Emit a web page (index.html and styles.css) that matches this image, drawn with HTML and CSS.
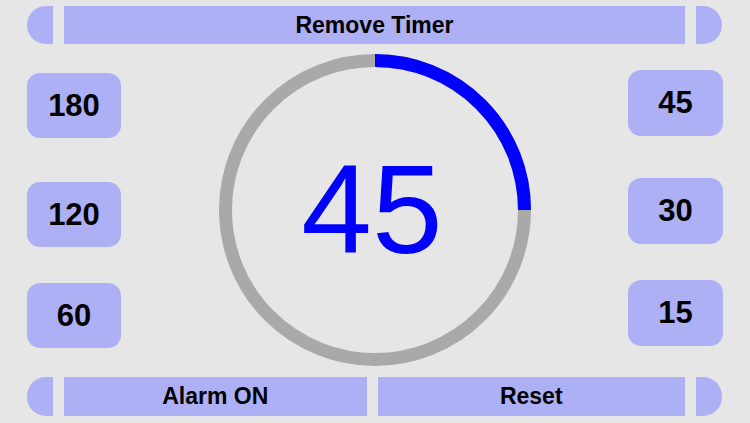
FILE: index.html
```html
<!DOCTYPE html>
<html>
<head>
<meta charset="utf-8">
<link rel="stylesheet" href="styles.css">
</head>
<body>
<div class="screen">
  <div class="bar-row top">
    <div class="cap cap-left"></div>
    <div class="bar">Remove Timer</div>
    <div class="cap cap-right"></div>
  </div>
  <div class="middle">
    <div class="col col-left">
      <div class="preset">180</div>
      <div class="preset">120</div>
      <div class="preset">60</div>
    </div>
    <div class="dial">
      <svg class="dial-svg" width="312" height="312" viewBox="0 0 312 312">
        <circle cx="156" cy="156" r="149.5" fill="none" stroke="#a9a9a9" stroke-width="13"/>
        <path d="M156 6.5 A149.5 149.5 0 0 1 305.5 156" fill="none" stroke="#0000ff" stroke-width="13"/>
        <text x="153" y="199" text-anchor="middle" class="dial-text">45</text>
      </svg>
    </div>
    <div class="col col-right">
      <div class="preset">45</div>
      <div class="preset">30</div>
      <div class="preset">15</div>
    </div>
  </div>
  <div class="bar-row bottom">
    <div class="cap cap-left"></div>
    <div class="bar bar-alarm">Alarm ON</div>
    <div class="bar bar-reset">Reset</div>
    <div class="cap cap-right"></div>
  </div>
</div>
</body>
</html>
```

FILE: styles.css
```css
html, body {
  margin: 0;
  padding: 0;
  background: #e6e6e6;
}
.screen {
  width: 750px;
  height: 423px;
  display: flex;
  flex-direction: column;
  font-family: "Liberation Sans", Arial, sans-serif;
  color: #000;
}
.bar-row {
  display: flex;
  gap: 11px;
  padding: 0 28px 0 27px;
}
.bar-row.top {
  height: 38px;
  margin-top: 6px;
}
.bar-row.bottom {
  height: 39px;
  margin-bottom: 7px;
}
.cap {
  width: 26px;
  background: #adb0f4;
}
.cap-left {
  border-radius: 19px 0 0 19px;
}
.cap-right {
  border-radius: 0 19px 19px 0;
}
.bar {
  flex: 1;
  background: #adb0f4;
  display: flex;
  align-items: center;
  justify-content: center;
  font-weight: bold;
  font-size: 23px;
}
.bar-alarm {
  flex: 303 1 0;
}
.bar-reset {
  flex: 308 1 0;
}
.middle {
  height: 333px;
  display: flex;
  padding: 0 27px;
}
.col {
  display: flex;
  flex-direction: column;
}
.col-left {
  width: 94px;
  padding-top: 29px;
}
.col-left .preset + .preset {
  margin-top: 44px;
}
.col-left .preset:last-child {
  margin-top: 36px;
}
.col-right {
  width: 95px;
  padding-top: 26px;
}
.col-right .preset + .preset {
  margin-top: 42px;
}
.col-right .preset:last-child {
  margin-top: 36px;
}
.preset {
  height: 65px;
  border-radius: 13px;
  background: #adb0f4;
  display: flex;
  align-items: center;
  justify-content: center;
  font-weight: bold;
  font-size: 31px;
}
.col-right .preset {
  height: 66px;
}
.dial {
  flex: 1;
  display: flex;
  justify-content: center;
  padding-top: 10px;
}
.dial-svg {
  display: block;
}
.dial-text {
  font-family: "Liberation Sans", Arial, sans-serif;
  font-size: 127px;
  fill: #0000ff;
}
```
